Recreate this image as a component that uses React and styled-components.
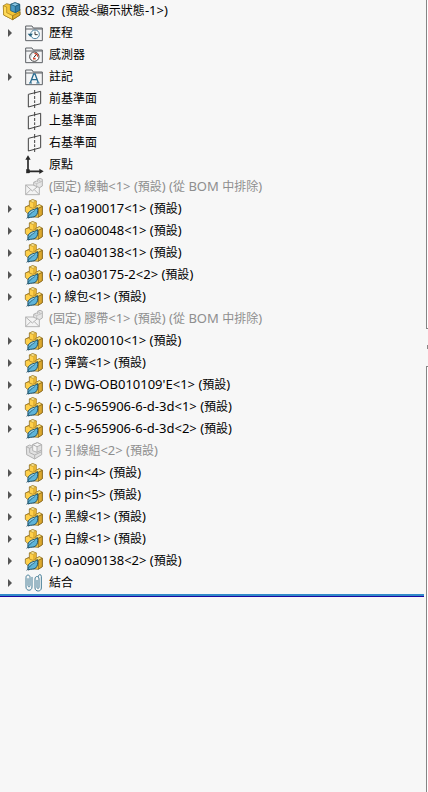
import React from "react"
import styled, { createGlobalStyle } from 'styled-components'

const items = [
  { icon: 'history', text: '歷程', arrow: true },
  { icon: 'sensor', text: '感測器' },
  { icon: 'note', text: '註記', arrow: true },
  { icon: 'plane', text: '前基準面' },
  { icon: 'plane', text: '上基準面' },
  { icon: 'plane', text: '右基準面' },
  { icon: 'origin', text: '原點' },
  { icon: 'envelope', text: '(固定) 線軸<1> (預設) (從 BOM 中排除)', muted: true },
  { icon: 'part', text: '(-) oa190017<1> (預設)', arrow: true },
  { icon: 'part', text: '(-) oa060048<1> (預設)', arrow: true },
  { icon: 'part', text: '(-) oa040138<1> (預設)', arrow: true },
  { icon: 'part', text: '(-) oa030175-2<2> (預設)', arrow: true },
  { icon: 'part', text: '(-) 線包<1> (預設)', arrow: true },
  { icon: 'envelope', text: '(固定) 膠帶<1> (預設) (從 BOM 中排除)', muted: true },
  { icon: 'part', text: '(-) ok020010<1> (預設)', arrow: true },
  { icon: 'part', text: '(-) 彈簧<1> (預設)', arrow: true },
  { icon: 'part', text: "(-) DWG-OB010109'E<1> (預設)", arrow: true },
  { icon: 'part', text: '(-) c-5-965906-6-d-3d<1> (預設)', arrow: true },
  { icon: 'part', text: '(-) c-5-965906-6-d-3d<2> (預設)', arrow: true },
  { icon: 'hidden', text: '(-) 引線組<2> (預設)', muted: true },
  { icon: 'part', text: '(-) pin<4> (預設)', arrow: true },
  { icon: 'part', text: '(-) pin<5> (預設)', arrow: true },
  { icon: 'part', text: '(-) 黑線<1> (預設)', arrow: true },
  { icon: 'part', text: '(-) 白線<1> (預設)', arrow: true },
  { icon: 'part', text: '(-) oa090138<2> (預設)', arrow: true },
  { icon: 'mates', text: '結合', arrow: true },
]

// all icons are drawn on a 54 unit grid
const Folder = () => (
  <path d="M2 50V6h19l4 6h27v38z M2 15h50" fill="#f4f5f6" stroke="#5d6165" strokeWidth="3" strokeLinejoin="round" />
)

const icons = {
  assembly: (
    <g strokeLinejoin="round" strokeWidth="2">
      <path d="M1 11l10-6 11 3v16l12 6 17-9v18L29 53 2 39z" fill="#f3c437" stroke="#8a6914" />
      <path d="M1 11l10 4v17l18 9v12L2 39z" fill="#ffdb59" stroke="#a17b1d" />
      <path d="M29 41l22-11v9L29 53z" fill="#e3ae2b" stroke="#8a6914" />
      <path d="M23 7l13-5 14 5v18l-13 7-14-6z" fill="#4a9ac4" stroke="#18536f" />
      <path d="M23 7l13-5 14 5-13 6z" fill="#8cc8e5" stroke="#18536f" />
      <path d="M37 13l13-6v18l-13 7z" fill="#3580aa" stroke="#18536f" />
    </g>
  ),
  part: (
    <g strokeLinejoin="round" strokeWidth="2">
      <path d="M13 3l10-4 11 4v15l9-4 9 5v25l-13 8-20-2L1 34V21l12-5z" fill="#ffd04a" stroke="#76591a" />
      <path d="M13 3l10-4 11 4-10 4z" fill="#fff0a1" stroke="#ab8424" />
      <path d="M24 7l10-4v15l-10 5z" fill="#e6b433" />
      <path d="M1 21l12-5v5l11 4 10-6" fill="none" stroke="#a17a22" />
      <path d="M30 21l13-7 9 5-12 6z" fill="#ffe47b" stroke="#a17a22" />
      <path d="M40 25l12-6v25l-12 8z" fill="#dca82d" stroke="#76591a" />
      <path d="M9 50c-2-9 2-15 10-19 7-3 13-3 19-8 1 12 0 19-6 25-6 5-14 2-23 6z" fill="#5fb4d8" stroke="#1d4f69" strokeWidth="3" />
      <path d="M5 56c6-11 14-18 25-25" fill="none" stroke="#154862" strokeWidth="2" />
      <path d="M13 40c4-6 9-7 15-9" fill="none" stroke="#c5ebf7" strokeWidth="2" />
    </g>
  ),
  history: (
    <g>
      <Folder />
      <circle cx="30" cy="31" r="13" fill="#f9ffff" stroke="#4c819e" strokeWidth="3" />
      <path d="M30 23v9h8" fill="none" stroke="#333" strokeWidth="3" />
      <path d="M8 29h16l-8 9z" fill="#25617e" />
    </g>
  ),
  sensor: (
    <g>
      <Folder />
      <circle cx="28" cy="32" r="14" fill="#fff" stroke="#424242" strokeWidth="3" />
      <path d="M28 22a10 10 0 0 1 10 10" fill="none" stroke="#df4a31" strokeWidth="4" />
      <path d="M18 34a10 10 0 0 1 7-12" fill="none" stroke="#9fadb2" strokeWidth="2" />
      <path d="M26 35l8-10" stroke="#222" strokeWidth="3" />
      <path d="M24 38h8" stroke="#df4a31" strokeWidth="5" />
    </g>
  ),
  note: (
    <g>
      <Folder />
      <path d="M16 44l10-26h4l10 26M20 35h16" fill="none" stroke="#286c91" strokeWidth="4" />
      <path d="M12 45h9M34 45h10" stroke="#286c91" strokeWidth="3" />
    </g>
  ),
  plane: (
    <g fill="none" stroke="#414141" strokeWidth="3">
      <path d="M10 13l37-9v37l-37 10z" />
      <path d="M29 0v13M29 18v9M29 31v8M29 43v11" />
    </g>
  ),
  origin: (
    <g fill="#292929" stroke="#292929">
      <path d="M9 8v38h37" fill="none" strokeWidth="5" />
      <path d="M9-2l8 13H1zM56 46l-13 8V38z" stroke="none" />
      <rect x="4" y="41" width="10" height="10" />
    </g>
  ),
  envelope: (
    <g fill="#f3f3f3" stroke="#b3b3b3" strokeWidth="3" strokeLinejoin="round">
      <path d="M2 21h41v29H2z" />
      <path d="M2 21l20 18 21-18M2 50l15-15M43 50L28 35" fill="none" />
      <path d="M26 13l8-4 4 2V4l7-3 7 3v20l-8 5-18-7z" fill="#e5e5e5" />
      <path d="M26 13l9 4v8M35 17l9-4 8-4M38 4l7 4v6" fill="none" strokeWidth="2" />
    </g>
  ),
  hidden: (
    <g fill="#e1e1e1" stroke="#b2b2b2" strokeWidth="3" strokeLinejoin="round">
      <path d="M4 14l10-5 9 4V8l14-6 13 6v30L29 51 5 38z" />
      <path d="M4 14l10 5v13l15 7 21-10M29 39v12M14 19l9-5" fill="none" />
      <path d="M23 8l14-6 13 6-14 6zM36 14v17l-13-5V8" fill="#f5f5f5" />
      <path d="M36 31l14-7" fill="none" />
    </g>
  ),
  mates: (
    <g fill="none" stroke="#447c96" strokeWidth="3" strokeLinecap="round">
      <path d="M9 14v20c0 6 6 6 6 0V10c0-9-12-9-12 0v29c0 13 18 13 18 0V10" />
      <path d="M36 19v20c0 6 6 6 6 0V15c0-10-12-10-12 0v27c0 12 19 12 19 0V7c0-7-9-7-9 0" />
    </g>
  ),
}

export default function App() {
  return (
    <Page>
      <GlobalStyle />
      <Panel>
        <Root>
          <Icon name="assembly" />
          <Name text={'0832\u00a0 (預設<顯示狀態-1>)'} />
        </Root>
        <Tree>
          {items.map((item, i) => (
            <Row key={i}>
              {item.arrow ? (
                <Expander type="button" aria-label={item.text}>
                  <svg width="4" height="8" viewBox="0 0 4 8"><path d="M0 0l4 4-4 4z" fill="#555" /></svg>
                </Expander>
              ) : <Spacer />}
              <Icon name={item.icon} />
              <Name text={item.text} muted={item.muted} />
            </Row>
          ))}
        </Tree>
        <RollbackBar />
      </Panel>
      <Splitter>
        <Edge $grow={328} $side="bottom" />
        <Collapse type="button" aria-label="collapse">
          <svg width="1" height="4" viewBox="0 0 1 4"><path d="M0 0h1v4H0z" fill="#888" /></svg>
        </Collapse>
        <Edge $grow={426} $side="top" />
      </Splitter>
    </Page>
  )
}

function Icon({ name }) {
  return <IconSvg viewBox="0 0 54 54" aria-hidden="true">{icons[name]}</IconSvg>
}

// Chinese runs are set one size below the latin ones
function Name({ text, muted }) {
  return (
    <Label $muted={muted}>
      {text.split(/([\u4e00-\u9fff]+)/).map((run, i) => i % 2 ? <Han key={i}>{run}</Han> : run)}
    </Label>
  )
}

const GlobalStyle = createGlobalStyle`
  body {
    margin: 0;
    background: #f7f7f7;
    font-family: "Noto Sans", "Noto Sans CJK TC", sans-serif;
    font-size: 13px;
  }
`
const Page = styled.div`
  display: flex;
  min-height: 100vh;
`
const Panel = styled.main`
  flex: 1;
  min-width: 0;
`
const Root = styled.div`
  display: flex;
  align-items: center;
  gap: 4px;
  height: 22px;
  padding-left: 3px;
`
const Tree = styled.ul`
  margin: 0;
  padding: 0;
  list-style: none;
`
const Row = styled.li`
  display: flex;
  align-items: center;
  height: 22px;
  gap: 6px;
`
const Spacer = styled.span`
  width: 19px;
  flex-shrink: 0;
`
const Expander = styled.button`
  display: flex;
  align-items: center;
  width: 19px;
  height: 22px;
  flex-shrink: 0;
  padding: 0 0 0 8px;
  border: 0;
  background: none;
`
const IconSvg = styled.svg`
  width: 18px;
  height: 18px;
  flex-shrink: 0;
  overflow: visible;
`
const Label = styled.span`
  align-self: flex-start;
  line-height: 20px;
  white-space: nowrap;
  color: ${props => props.$muted ? '#8e8e8e' : '#000'};
`
const Han = styled.span`
  font-size: 12px;
`
const RollbackBar = styled.div`
  height: 2px;
  margin-right: 2px;
  background: #318ac9;
  border-bottom: 1px solid #1b08a0;
`
const Splitter = styled.div`
  display: flex;
  flex-direction: column;
  width: 2px;
`
const Edge = styled.div`
  flex: ${props => props.$grow} 0 0;
  border-left: 1px solid #858585;
  border-${props => props.$side}: 1px solid #858585;
  background: #fff;
`
const Collapse = styled.button`
  display: flex;
  align-items: center;
  justify-content: flex-end;
  height: 37px;
  padding: 0;
  border: 0;
  background: none;
`
